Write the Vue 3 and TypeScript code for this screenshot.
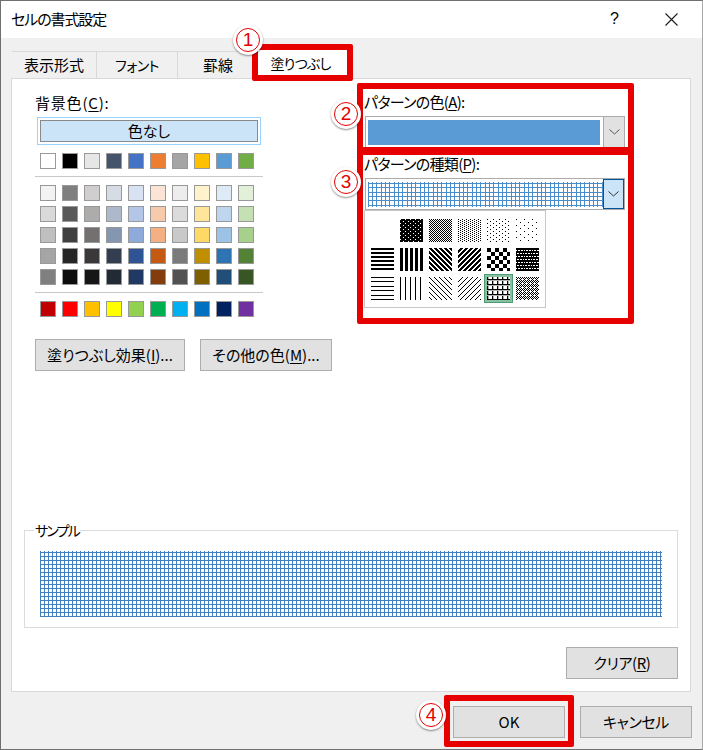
<script setup lang="ts">
interface Pat { id: string; rows: string[] }
interface Px { x: number; y: number; o: number }

const themeRow = ['#ffffff','#000000','#e7e6e6','#44546a','#4472c4','#ed7d31','#a5a5a5','#ffc000','#5b9bd5','#70ad47']
const shades = [
  '#f2f2f2','#7f7f7f','#d0cece','#d6dce4','#d9e2f3','#fbe4d5','#ededed','#fff2cc','#deeaf6','#e2efd9',
  '#d9d9d9','#595959','#aeabab','#adb9ca','#b4c6e7','#f7caac','#dbdbdb','#ffe599','#bdd6ee','#c5e0b3',
  '#bfbfbf','#404040','#757070','#8496b0','#8eaadb','#f4b083','#c9c9c9','#ffd966','#9cc2e5','#a8d08d',
  '#a5a5a5','#262626','#3a3838','#323e4f','#2f5496','#c45911','#7b7b7b','#bf8f00','#2e74b5','#538135',
  '#7f7f7f','#0d0d0d','#171616','#222a35','#1f3864','#833c0b','#525252','#7f6000','#1f4e79','#385623',
]
const accents = ['#c00000','#ff0000','#ffc000','#ffff00','#92d050','#00b050','#00b0f0','#0070c0','#002060','#7030a0']

const patterns: Pat[] = [
  { id: 'none', rows: ['.'] },
  { id: 'g75', rows: ['.####', '#####', '###.#', '#####'] },
  { id: 'g50', rows: ['#.', '.#'] },
  { id: 'g25', rows: ['#...', '..#.'] },
  { id: 'g12', rows: ['#.....', '......', '...#..', '......'] },
  { id: 'g6', rows: ['#.......', '........', '........', '....#...', '........', '........'] },
  { id: 'thh', rows: ['#', '#', '.', '.'] },
  { id: 'thv', rows: ['###..'] },
  { id: 'trd', rows: ['###..', '.###.', '..###', '#..##', '##..#'] },
  { id: 'tdg', rows: ['..###', '.###.', '###..', '##..#', '#..##'] },
  { id: 'tdx', rows: ['####....', '####....', '####....', '####....', '....####', '....####', '....####', '....####'] },
  { id: 'thx', rows: ['########', '########', '.#..#..#', '########', '########', '#..#..#.'] },
  { id: 'tnh', rows: ['#', '.', '.', '.', '#', '.', '.', '.', '.'] },
  { id: 'tnv', rows: ['#....'] },
  { id: 'nrd', rows: ['#....', '.#...', '..#..', '...#.', '....#'] },
  { id: 'ndg', rows: ['....#', '...#.', '..#..', '.#...', '#....'] },
  { id: 'nhx', rows: ['#+...', '#+...', '#####', '+++++', '#+...'] },
  { id: 'ndx', rows: ['#.#.', '.#.#', '#...', '.#.#'] },
]

function pixels(rows: string[]): Px[] {
  const out: Px[] = []
  rows.forEach((r, y) => [...r].forEach((c, x) => {
    if (c === '#') out.push({ x, y, o: 1 })
    else if (c === '+') out.push({ x, y, o: 0.3 })
  }))
  return out
}

const sampleGrid = ['#...', '####', '#...', '#...']
const comboGrid = [
  '#...#...#....', '#############', '#...#...#....', '#...#...#....', '#...#...#....',
  '#############', '#...#...#....', '#...#...#....', '#...#...#....', '#...#...#....',
  '#############', '#...#...#....', '#...#...#....',
]
</script>

<template>
  <div class="dialog">
    <header class="titlebar">
      <span class="title">セルの書式設定</span>
      <span class="help">?</span>
      <svg class="close" width="13" height="13" viewBox="0 0 13 13">
        <path d="M0.5 0.5 L12.5 12.5 M12.5 0.5 L0.5 12.5" stroke="#1a1a1a" stroke-width="1.1" fill="none" />
      </svg>
    </header>

    <nav class="tabs">
      <div class="tab t1">表示形式</div>
      <div class="tab t2"><span class="kana">フォント</span></div>
      <div class="tab t3">罫線</div>
      <div class="tab t4"><span class="kana strong">塗りつぶし</span></div>
    </nav>

    <main class="panel">
      <div class="columns">
        <section class="left">
          <div class="label bg-label">背景色(<u>C</u>):</div>
          <div class="nofill"><span>色なし</span></div>
          <div class="swatches first">
            <i v-for="c in themeRow" :key="c" class="sw" :style="{ background: c }"></i>
          </div>
          <div class="sep"></div>
          <div class="swatches">
            <i v-for="(c, n) in shades" :key="n" class="sw" :style="{ background: c }"></i>
          </div>
          <div class="sep"></div>
          <div class="swatches">
            <i v-for="c in accents" :key="c" class="sw" :style="{ background: c }"></i>
          </div>
          <div class="leftbtns">
            <button class="btn effect">塗りつぶし効果(<u>I</u>)...</button>
            <button class="btn more">その他の色(<u>M</u>)...</button>
          </div>
        </section>

        <section class="right">
          <div class="label rlabel">パターンの色(<u>A</u>):</div>
          <div class="combo">
            <div class="combo-value solid"></div>
            <div class="drop">
              <svg width="11" height="6" viewBox="0 0 11 6"><path d="M0.5 0.5 L5.5 5 L10.5 0.5" fill="none" stroke="#555" /></svg>
            </div>
          </div>
          <div class="label rlabel second">パターンの種類(<u>P</u>):</div>
          <div class="combo">
            <svg class="combo-value" width="235" height="25">
              <defs>
                <pattern id="hatch-combo" patternUnits="userSpaceOnUse" width="13" height="13">
                  <rect v-for="p in pixels(comboGrid)" :key="`${p.x}-${p.y}`" :x="p.x" :y="p.y" width="1" height="1" fill="#4a8bca" :fill-opacity="p.o" />
                </pattern>
              </defs>
              <rect width="235" height="25" fill="url(#hatch-combo)" shape-rendering="crispEdges" />
            </svg>
            <div class="drop active">
              <svg width="11" height="6" viewBox="0 0 11 6"><path d="M0.5 0.5 L5.5 5 L10.5 0.5" fill="none" stroke="#333" /></svg>
            </div>
            <div class="popup">
              <div v-for="pat in patterns" :key="pat.id" class="cell" :class="{ selected: pat.id === 'nhx' }">
                <svg width="23" height="23">
                  <defs>
                    <pattern :id="`p-${pat.id}`" patternUnits="userSpaceOnUse" :width="pat.rows[0].length" :height="pat.rows.length">
                      <rect v-for="p in pixels(pat.rows)" :key="`${p.x}-${p.y}`" :x="p.x" :y="p.y" width="1" height="1" fill="#000" :fill-opacity="p.o" />
                    </pattern>
                  </defs>
                  <rect width="23" height="23" :fill="`url(#p-${pat.id})`" shape-rendering="crispEdges" />
                </svg>
              </div>
            </div>
          </div>
        </section>
      </div>

      <section class="sample">
        <span class="legend">サンプル</span>
        <svg class="sample-fill" width="622" height="66">
          <defs>
            <pattern id="hatch-sample" patternUnits="userSpaceOnUse" width="4" height="4">
              <rect v-for="p in pixels(sampleGrid)" :key="`${p.x}-${p.y}`" :x="p.x" :y="p.y" width="1" height="1" fill="#3f7fbf" :fill-opacity="p.o" />
            </pattern>
          </defs>
          <rect width="622" height="66" fill="url(#hatch-sample)" shape-rendering="crispEdges" />
        </svg>
      </section>

      <div class="clear-row">
        <button class="btn wide tight">クリア(<u>R</u>)</button>
      </div>
    </main>

    <footer class="footer">
      <button class="btn wide ok">OK</button>
      <button class="btn wide tight">キャンセル</button>
    </footer>

    <div class="mark m-tab"></div>
    <div class="mark m-color"></div>
    <div class="mark m-kind"></div>
    <div class="mark m-ok"></div>
    <div class="num n1"><b>1</b></div>
    <div class="num n2"><b>2</b></div>
    <div class="num n3"><b>3</b></div>
    <div class="num n4"><b>4</b></div>
  </div>
</template>

<style>
html, body { margin: 0; background: #f0f0f0; }
</style>

<style scoped>
.dialog {
  position: relative;
  width: 703px;
  height: 750px;
  overflow: hidden;
  background: #f0f0f0;
  color: #000;
  font-family: "Noto Sans CJK JP", "Noto Sans", sans-serif;
  font-size: 15px;
  line-height: 20px;
  font-feature-settings: "palt";
  display: flex;
  flex-direction: column;
}
.dialog::after {
  content: "";
  position: absolute;
  inset: 0;
  border: 1px solid #6f6f6f;
  border-right-color: #a8a8a8;
  pointer-events: none;
}
u { text-underline-offset: 2px; text-decoration-thickness: 1px; }

.titlebar {
  height: 38px;
  flex: none;
  background: #fff;
  display: flex;
  align-items: center;
  padding: 0 25px 0 11px;
}
.title { flex: 1; font-size: 15px; letter-spacing: -1.1px; }
.help { font-family: "Liberation Sans", sans-serif; font-size: 16px; margin-right: 46px; }

.tabs {
  flex: none;
  height: 40px;
  display: flex;
  align-items: flex-end;
  padding-left: 12px;
}
.tab {
  height: 27px;
  box-sizing: border-box;
  display: flex;
  align-items: center;
  justify-content: center;
  border-top: 1px solid #d9d9d9;
  border-right: 1px solid #d9d9d9;
}
.kana { font-size: 14px; letter-spacing: -0.5px; }
.kana.strong { letter-spacing: -0.8px; }
.t1 { width: 85px; }
.t2 { width: 81px; }
.t3 { width: 75px; padding-left: 6px; }
.t4 { width: 95px; background: #fff; height: 32px; border: none; margin-bottom: -1px; position: relative; z-index: 1; }

.panel {
  flex: none;
  box-sizing: border-box;
  width: 680px;
  height: 614px;
  margin-left: 11px;
  padding: 14px 12px 0;
  background: #fff;
  border: 1px solid #d9d9d9;
}
.columns { display: flex; height: 437px; }
.left { width: 298px; margin-left: 11px; flex: none; }
.right { margin-left: 31px; width: 261px; flex: none; }
.label { height: 20px; }
.bg-label { letter-spacing: 0.8px; }
.rlabel { line-height: 18px; letter-spacing: -0.7px; margin-bottom: 3px; }
.rlabel.second { margin-top: 7px; }

.nofill {
  width: 224px;
  height: 28px;
  margin: 4px 0 0 2px;
  box-sizing: border-box;
  padding: 2px;
  border: 1px solid #99d1ff;
  background: #fff;
}
.nofill span {
  display: flex;
  align-items: center;
  justify-content: center;
  height: 100%;
  box-sizing: border-box;
  border: 1px solid #8a8a8a;
  background: #cce4f7;
}
.swatches {
  display: grid;
  grid-template-columns: repeat(10, 16px);
  gap: 5px 6px;
  margin-left: 5px;
}
.swatches.first { margin-top: 8px; }
.sw { display: block; width: 16px; height: 16px; box-sizing: border-box; border: 1px solid #999; }
.sep { width: 228px; height: 1px; background: #c8c8c8; margin: 7px 0 8px; }

.btn {
  font: inherit;
  font-feature-settings: inherit;
  color: #000;
  height: 32px;
  padding: 0;
  box-sizing: border-box;
  border: 1px solid #adadad;
  background: #e1e1e1;
}
.tight { letter-spacing: -0.4px; }
.leftbtns { display: flex; gap: 15px; margin-top: 22px; }
.effect { width: 150px; }
.more { width: 132px; }
.wide { width: 112px; }

.combo { position: relative; display: flex; width: 260px; height: 32px; margin-left: 1px; box-sizing: border-box; border: 1px solid #ababab; background: #fff; align-items: center; }
.combo-value { margin-left: 2px; display: block; }
.solid { width: 232px; height: 25px; background: #5b9bd5; }
.drop {
  position: absolute;
  right: 0;
  top: 0;
  width: 21px;
  height: 30px;
  box-sizing: border-box;
  border-left: 1px solid #ababab;
  background: #e1e1e1;
  display: flex;
  align-items: center;
  justify-content: center;
}
.drop.active { background: #cce4f7; border: 1px solid #005499; }

.popup {
  position: absolute;
  z-index: 2;
  left: -2px;
  top: 31px;
  width: 182px;
  height: 98px;
  box-sizing: border-box;
  padding: 8px 6px 7px;
  border: 1px solid #c6c6c6;
  background: #fff;
  display: grid;
  grid-template-columns: repeat(6, 23px);
  grid-auto-rows: 23px;
  gap: 6px;
}
.cell { position: relative; width: 23px; height: 23px; }
.cell svg { display: block; position: relative; background: #fff; }
.selected::before {
  content: "";
  position: absolute;
  inset: -3px;
  box-sizing: border-box;
  border: 1px solid #4f9a74;
  background: #86c2a2;
}

.sample {
  position: relative;
  width: 654px;
  height: 98px;
  box-sizing: border-box;
  border: 1px solid #dcdcdc;
  padding: 20px 0 0 15px;
}
.legend { position: absolute; left: 9px; top: -9px; padding: 0 1px; background: #fff; line-height: 16px; font-size: 14px; letter-spacing: -1.8px; }
.sample-fill { display: block; }

.clear-row { display: flex; justify-content: flex-end; margin-top: 19px; }

.footer { flex: 1; display: flex; justify-content: flex-end; gap: 15px; padding: 14px 11px 0 0; }

.mark { position: absolute; box-sizing: border-box; border: 6px solid #e60000; border-radius: 2px; pointer-events: none; z-index: 3; }
.m-tab { left: 252px; top: 44px; width: 101px; height: 37px; }
.m-color { left: 357px; top: 83px; width: 277px; height: 70px; }
.m-kind { left: 357px; top: 149px; width: 277px; height: 175px; }
.m-ok { left: 444px; top: 695px; width: 130px; height: 52px; }

.num {
  position: absolute;
  z-index: 4;
  width: 30px;
  height: 30px;
  margin: -15px 0 0 -15px;
  border-radius: 50%;
  background: #fff;
  box-shadow: 0 1px 2px rgba(0, 0, 0, .45);
  display: flex;
  align-items: center;
  justify-content: center;
}
.num b {
  display: flex;
  align-items: center;
  justify-content: center;
  width: 24px;
  height: 24px;
  box-sizing: border-box;
  border: 1.5px solid #e60000;
  border-radius: 50%;
  color: #e60000;
  font-family: "Liberation Sans", sans-serif;
  font-weight: 400;
  font-size: 19px;
}
.n1 { left: 248px; top: 40px; }
.n2 { left: 346px; top: 114px; }
.n3 { left: 346px; top: 182px; }
.n4 { left: 431px; top: 715px; }
</style>
